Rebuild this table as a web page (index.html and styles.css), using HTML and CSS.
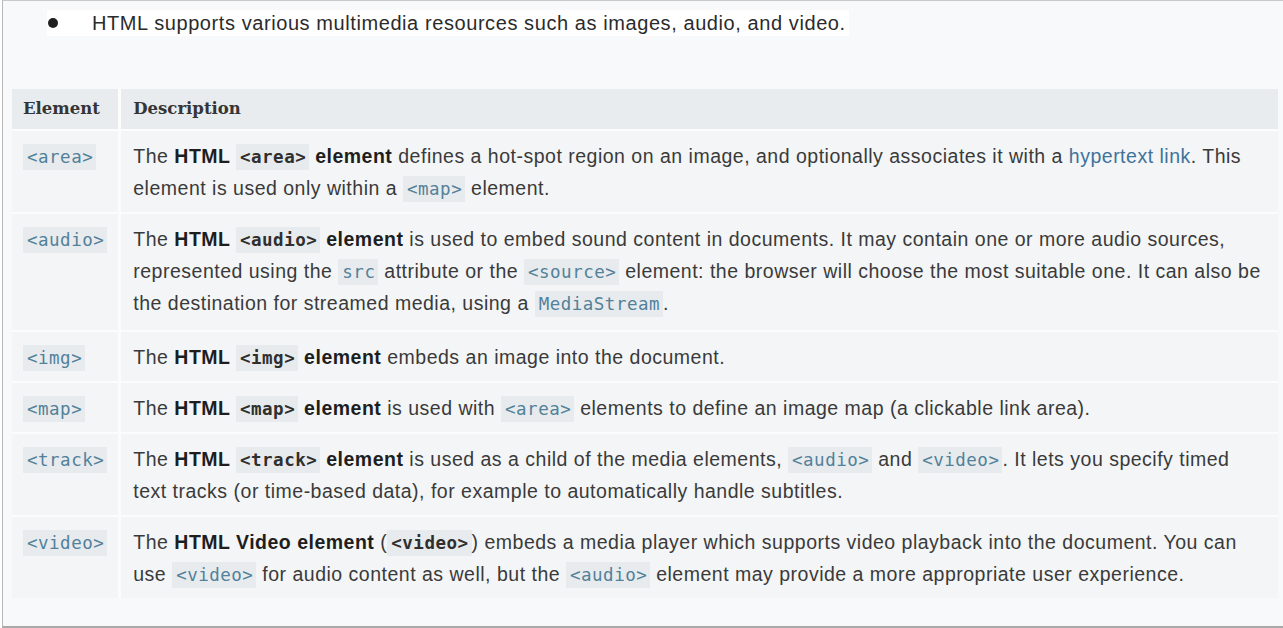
FILE: index.html
```html
<!DOCTYPE html>
<html lang="en">
<head>
<meta charset="utf-8">
<title>HTML multimedia elements</title>
<link rel="stylesheet" href="styles.css">
</head>
<body>
<div class="frame">
  <ul class="intro">
    <li><span class="intro-text">HTML supports various multimedia resources such as images, audio, and video.</span></li>
  </ul>
  <table class="ref">
    <thead>
      <tr><th class="col-el">Element</th><th>Description</th></tr>
    </thead>
    <tbody>
      <tr>
        <td class="col-el"><code>&lt;area&gt;</code></td>
        <td>The <strong>HTML <code>&lt;area&gt;</code> element</strong> defines a hot-spot region on an image, and optionally associates it with a <a href="#">hypertext link</a>. This element is used only within a <code>&lt;map&gt;</code> element.</td>
      </tr>
      <tr class="tall">
        <td class="col-el"><code>&lt;audio&gt;</code></td>
        <td>The <strong>HTML <code>&lt;audio&gt;</code> element</strong> is used to embed sound content in documents. It may contain one or more audio sources, represented using the <code>src</code> attribute or the <code>&lt;source&gt;</code> element: the browser will choose the most suitable one. It can also be the destination for streamed media, using a <code>MediaStream</code>.</td>
      </tr>
      <tr>
        <td class="col-el"><code>&lt;img&gt;</code></td>
        <td>The <strong>HTML <code>&lt;img&gt;</code> element</strong> embeds an image into the document.</td>
      </tr>
      <tr>
        <td class="col-el"><code>&lt;map&gt;</code></td>
        <td>The <strong>HTML <code>&lt;map&gt;</code> element</strong> is used with <code>&lt;area&gt;</code> elements to define an image map (a clickable link area).</td>
      </tr>
      <tr>
        <td class="col-el"><code>&lt;track&gt;</code></td>
        <td>The <strong>HTML <code>&lt;track&gt;</code> element</strong> is used as a child of the media elements, <code>&lt;audio&gt;</code> and <code>&lt;video&gt;</code>. It lets you specify timed text tracks (or time-based data), for example to automatically handle subtitles.</td>
      </tr>
      <tr>
        <td class="col-el"><code>&lt;video&gt;</code></td>
        <td>The <strong>HTML Video element</strong> (<strong><code>&lt;video&gt;</code></strong>) embeds a media player which supports video playback into the document. You can use <code>&lt;video&gt;</code> for audio content as well, but the <code>&lt;audio&gt;</code> element may provide a more appropriate user experience.</td>
      </tr>
    </tbody>
  </table>
</div>
</body>
</html>
```
FILE: styles.css
```css
html, body {
  margin: 0;
  padding: 0;
  background: #ffffff;
}
body {
  font-family: "Liberation Sans", Arial, sans-serif;
  color: #3a3a3a;
}
.frame {
  box-sizing: border-box;
  margin-left: 2px;
  width: 1281px;
  height: 628px;
  border-top: 1px solid #c9c9c9;
  border-left: 1px solid #b9b9b9;
  border-bottom: 2px solid #a9a9a9;
  background: #f8f9fa;
  padding: 9px 0 0 9px;
}
.intro {
  margin: 0 0 0 35px;
  padding: 0;
  list-style: none;
}
.intro li {
  display: inline-flex;
  align-items: center;
  background: #ffffff;
  font-size: 20px;
  letter-spacing: 0.58px;
  line-height: 26px;
  padding: 0 3px 0 1px;
  color: #2b2b2b;
}
.intro li::before {
  content: "";
  width: 10px;
  height: 10px;
  border-radius: 50%;
  background: #1f1f1f;
  margin-right: 34px;
}
.ref {
  margin-top: 53px;
  width: 1266px;
  border-collapse: collapse;
  font-size: 19.5px;
  letter-spacing: 0.5px;
  line-height: 32px;
}
.ref th {
  background: #e9ecef;
  text-align: left;
  font-family: "DejaVu Serif", "Liberation Serif", serif;
  font-weight: bold;
  font-size: 16.5px;
  letter-spacing: 0;
  line-height: 24px;
  color: #353535;
  padding: 8px 12px;
  border-bottom: 1px solid #d9dde1;
  border-left: 3px solid #fbfcfc;
}
.ref td {
  background: #f3f5f7;
  vertical-align: top;
  padding: 9px 11px 8px 12px;
  border-top: 2px solid #fbfcfc;
  border-left: 3px solid #fbfcfc;
}
.ref tr.tall td {
  padding-bottom: 11px;
}
.ref th.col-el, .ref td.col-el {
  border-left: none;
  width: 82px;
  padding-left: 11px;
}
.ref code {
  font-family: "DejaVu Sans Mono", "Liberation Mono", monospace;
  font-size: 17.5px;
  line-height: 1;
  letter-spacing: 0.5px;
  background: #e8ebed;
  color: #52819a;
  padding: 3px 3px 3px 4px;
}
.ref strong {
  color: #1e1e1e;
}
.ref strong code {
  color: #2f2f2f;
  font-weight: bold;
}
.ref a {
  color: #3f729a;
  text-decoration: none;
}
```
